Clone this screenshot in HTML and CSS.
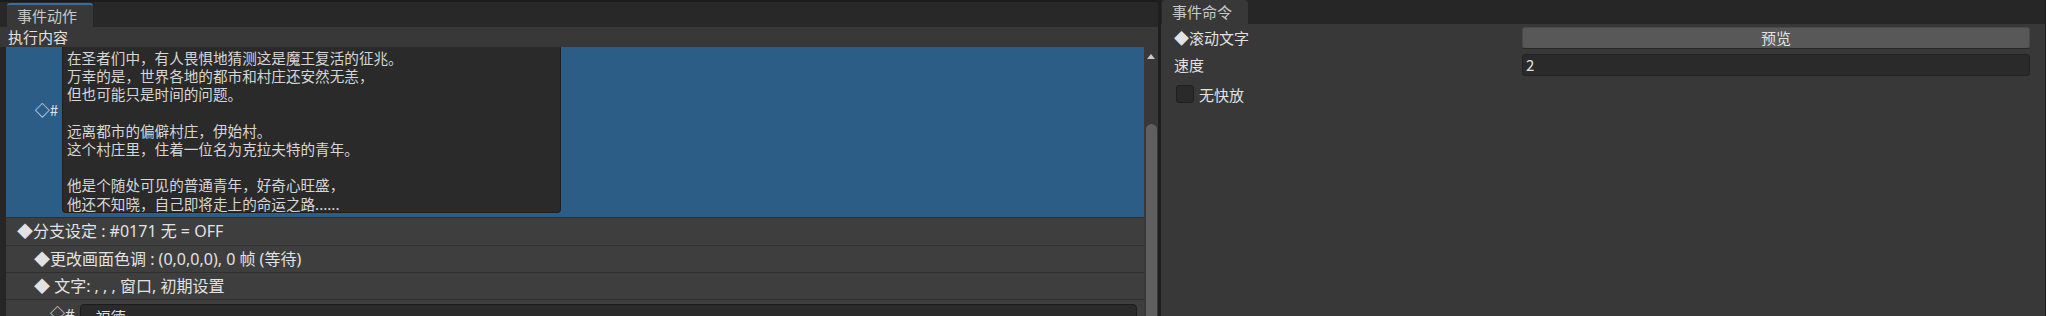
FILE: index.html
```html
<!DOCTYPE html>
<html>
    <head>
        <meta charset="utf-8">
        <title>事件</title>
        <link rel="stylesheet" href="styles.css">
    </head>
    <body>
        <div class="editor">

            <div class="pane left">
                <div class="tabbar"><div class="tab active">事件动作</div></div>
                <div class="caption">执行内容</div>

                <div class="listwrap">
                    <div class="list">
                        <div class="row selected">
                            <div class="mark">◇#</div>
                            <div class="textbox">在圣者们中，有人畏惧地猜测这是魔王复活的征兆。<br>万幸的是，世界各地的都市和村庄还安然无恙，<br>但也可能只是时间的问题。<br><br>远离都市的偏僻村庄，伊始村。<br>这个村庄里，住着一位名为克拉夫特的青年。<br><br>他是个随处可见的普通青年，好奇心旺盛，<br>他还不知晓，自己即将走上的命运之路......</div>
                        </div>
                        <div class="row lv0 first">◆分支设定 : #0171 无 = OFF</div>
                        <div class="row lv1">◆更改画面色调 : (0,0,0,0), 0 帧 (等待)</div>
                        <div class="row lv1">◆ 文字: , , , 窗口, 初期设置</div>
                        <div class="row lv2">
                            <span class="mark small">◇#</span>
                            <div class="field">福德</div>
                        </div>
                    </div>
                    <div class="scrollbar">
                        <div class="arrow"></div>
                        <div class="thumb"></div>
                    </div>
                </div>
            </div>

            <div class="pane right">
                <div class="tabbar"><div class="tab">事件命令</div></div>
                <div class="props">
                    <div class="label">◆滚动文字</div>
                    <div class="button">预览</div>
                    <div class="label">速度</div>
                    <div class="input">2</div>
                    <div class="check"><span class="box"></span>无快放</div>
                </div>
            </div>

        </div>
    </body>
</html>
```

FILE: styles.css
```css
body{
    margin: 0;
    width: 2046px;
    height: 316px;
    overflow: hidden;
    background-color: #1e1e1e;
    font-family: "Noto Sans CJK SC", "Noto Sans", sans-serif;
    color: #e2e2e2;
}

.editor{
    display: flex;
    gap: 3px;
    height: 316px;
}

.pane{
    display: flex;
    flex-direction: column;
}

.left{
    width: 1158px;
}

.right{
    flex: 1;
    border-right: 1px solid #1a1a1a;
    background-color: #383838;
}

/* tabs */

.tabbar{
    display: flex;
    background-color: #262626;
}

.left .tabbar{
    height: 27px;
    box-sizing: border-box;
    border-top: 2px solid #1b1b1b;
    padding: 1px 0 0 7px;
    background-color: #282828;
}

.right .tabbar{
    height: 24px;
    padding-left: 1px;
}

.tab{
    width: 86px;
    box-sizing: border-box;
    padding-left: 10px;
    background-color: #383838;
    border-radius: 3px 3px 0 0;
    color: #c9c9c9;
    font-size: 15px;
    line-height: 24px;
}

.tab.active{
    border-top: 2px solid #3b6e9f;
    line-height: 22px;
}

.caption{
    height: 20px;
    padding-left: 8px;
    background-color: #383838;
    font-size: 15px;
    line-height: 20px;
}

/* event list */

.listwrap{
    flex: 1;
    display: flex;
    min-height: 0;
    background-color: #262626;
}

.list{
    flex: 1;
    padding-left: 6px;
    overflow: hidden;
}

.row{
    height: 26px;
    border-top: 1px solid #303030;
    background-color: #3e3e3e;
    font-family: "Noto Sans", "Noto Sans CJK SC", sans-serif;
    font-size: 16px;
    line-height: 26px;
    white-space: nowrap;
}

.row.first{
    height: 27px;
}

.lv0{ padding-left: 11px; }
.lv1{ padding-left: 28px; }
.lv2{
    display: flex;
    align-items: flex-start;
    padding-left: 44px;
    height: 40px;
}

.row.selected{
    display: flex;
    align-items: flex-start;
    height: 170px;
    border-top: none;
    padding-left: 0;
    background-color: #2c5d87;
    font-family: "Noto Sans CJK SC", sans-serif;
}

.mark{
    width: 56px;
    box-sizing: border-box;
    padding-right: 4px;
    margin-top: 53px;
    text-align: right;
    font-size: 15px;
    line-height: 20px;
}

.mark.small{
    width: auto;
    margin-top: 0;
    padding-right: 5px;
    line-height: 26px;
}

.textbox{
    width: 499px;
    height: 166px;
    box-sizing: border-box;
    padding: 2px 0 0 4px;
    overflow: hidden;
    background-color: #2a2a2a;
    border: 1px solid #1f1f1f;
    border-top: none;
    border-radius: 0 0 4px 4px;
    color: #d6d6d6;
    font-size: 14.6px;
    line-height: 18.2px;
    white-space: nowrap;
}

.field{
    width: 1057px;
    height: 26px;
    margin-top: 4px;
    box-sizing: border-box;
    padding-left: 15px;
    background-color: #2a2a2a;
    border: 1px solid #1c1c1c;
    border-radius: 4px;
    font-size: 15px;
    line-height: 24px;
}

.scrollbar{
    width: 14px;
    display: flex;
    flex-direction: column;
    align-items: center;
    background-color: #383838;
}

.arrow{
    margin-top: 7px;
    width: 0;
    height: 0;
    border-left: 4px solid transparent;
    border-right: 4px solid transparent;
    border-bottom: 5px solid #c8c8c8;
}

.thumb{
    flex: 1;
    width: 11px;
    margin-top: 65px;
    background-color: #5f5f5f;
    border-radius: 6px 6px 0 0;
}

/* properties */

.props{
    flex: 1;
    display: grid;
    grid-template-columns: 348px 508px;
    grid-auto-rows: 22px;
    row-gap: 5px;
    align-content: start;
    padding: 3px 15px 0 13px;
    font-size: 15px;
}

.label{
    line-height: 22px;
}

.button,
.input{
    box-sizing: border-box;
    border-radius: 3px;
    line-height: 20px;
}

.button{
    background-color: #585858;
    border: 1px solid #4a4a4a;
    border-bottom-color: #262626;
    text-align: center;
}

.input{
    padding-left: 3px;
    background-color: #2a2a2a;
    border: 1px solid #222;
}

.check{
    grid-column: 1 / -1;
    display: flex;
    align-items: center;
    margin-top: 4px;
    padding-left: 2px;
    height: 18px;
}

.box{
    width: 18px;
    height: 18px;
    box-sizing: border-box;
    margin-right: 5px;
    background-color: #2a2a2a;
    border: 1px solid #1f1f1f;
    border-radius: 3px;
}
```
